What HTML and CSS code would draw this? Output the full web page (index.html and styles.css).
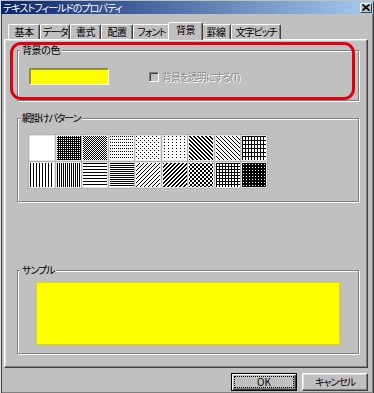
FILE: index.html
```html
<!DOCTYPE html>
<html lang="ja">
<head>
<meta charset="utf-8">
<title>テキストフィールドのプロパティ</title>
<link rel="stylesheet" href="styles.css">
</head>
<body>
<svg class="defs" width="0" height="0" aria-hidden="true">
  <defs>
    <pattern id="p-d75" width="2" height="2" patternUnits="userSpaceOnUse"><rect width="2" height="2" fill="#000"/><path d="M0 0h1v1h-1z" fill="#fff"/></pattern>
    <pattern id="p-d50" width="2" height="2" patternUnits="userSpaceOnUse"><rect width="2" height="2" fill="#fff"/><path d="M0 0h1v1h-1zM1 1h1v1h-1z" fill="#000"/></pattern>
    <pattern id="p-rows" width="2" height="3" patternUnits="userSpaceOnUse"><rect width="2" height="3" fill="#fff"/><path d="M0 0h1v1h-1z" fill="#000"/></pattern>
    <pattern id="p-dots" width="4" height="4" patternUnits="userSpaceOnUse"><rect width="4" height="4" fill="#fff"/><path d="M0 0h1v1h-1zM2 2h1v1h-1z" fill="#000"/></pattern>
    <pattern id="p-sparse" width="4" height="6" patternUnits="userSpaceOnUse"><rect width="4" height="6" fill="#fff"/><path d="M1 0h1v1h-1zM1 3h1v1h-1z" fill="#000"/></pattern>
    <pattern id="p-bk-thick" width="4" height="4" patternUnits="userSpaceOnUse"><rect width="4" height="4" fill="#fff"/><path d="M0 0h2v1h-2zM1 1h2v1h-2zM2 2h2v1h-2zM3 3h1v1h-1zM0 3h1v1h-1z" fill="#000"/></pattern>
    <pattern id="p-bk-thin" width="4" height="4" patternUnits="userSpaceOnUse"><rect width="4" height="4" fill="#fff"/><path d="M0 0h1v1h-1zM1 1h1v1h-1zM2 2h1v1h-1zM3 3h1v1h-1z" fill="#000"/></pattern>
    <pattern id="p-grid" width="3" height="4" patternUnits="userSpaceOnUse"><rect width="3" height="4" fill="#fff"/><path d="M0 0h1v4h-1zM0 0h3v1h-3z" fill="#000"/></pattern>
    <pattern id="p-v3" width="3" height="1" patternUnits="userSpaceOnUse"><rect width="3" height="1" fill="#fff"/><path d="M0 0h1v1h-1z" fill="#000"/></pattern>
    <pattern id="p-v2" width="2" height="1" patternUnits="userSpaceOnUse"><rect width="2" height="1" fill="#fff"/><path d="M0 0h1v1h-1z" fill="#000"/></pattern>
    <pattern id="p-h3" width="1" height="3" patternUnits="userSpaceOnUse"><rect width="1" height="3" fill="#fff"/><path d="M0 0h1v1h-1z" fill="#000"/></pattern>
    <pattern id="p-h2" width="1" height="2" patternUnits="userSpaceOnUse"><rect width="1" height="2" fill="#fff"/><path d="M0 0h1v1h-1z" fill="#000"/></pattern>
    <pattern id="p-fw-thin" width="4" height="4" patternUnits="userSpaceOnUse"><rect width="4" height="4" fill="#fff"/><path d="M3 0h1v1h-1zM2 1h1v1h-1zM1 2h1v1h-1zM0 3h1v1h-1z" fill="#000"/></pattern>
    <pattern id="p-fw-thick" width="4" height="4" patternUnits="userSpaceOnUse"><rect width="4" height="4" fill="#fff"/><path d="M3 0h1v1h-1zM0 0h1v1h-1zM2 1h2v1h-2zM1 2h2v1h-2zM0 3h2v1h-2z" fill="#000"/></pattern>
    <pattern id="p-x" width="4" height="4" patternUnits="userSpaceOnUse"><rect width="4" height="4" fill="#fff"/><path d="M0 0h1v1h-1zM1 1h1v1h-1zM2 2h1v1h-1zM3 3h1v1h-1zM3 0h1v1h-1zM2 1h1v1h-1zM1 2h1v1h-1zM0 3h1v1h-1z" fill="#000"/></pattern>
    <pattern id="p-grid3" width="3" height="3" patternUnits="userSpaceOnUse"><rect width="3" height="3" fill="#fff"/><path d="M0 0h1v3h-1zM0 0h3v1h-3z" fill="#000"/></pattern>
    <pattern id="p-dark" width="3" height="3" patternUnits="userSpaceOnUse"><rect width="3" height="3" fill="#000"/><path d="M1 1h1v1h-1z" fill="#fff"/></pattern>
  </defs>
</svg>

<div class="window">
  <div class="titlebar">
    <span class="title">テキストフィールドのプロパティ</span>
    <span class="close"><svg width="8" height="7" viewBox="0 0 8 7"><path d="M0.5 0.5L7.5 6.5M7.5 0.5L0.5 6.5" stroke="#000" stroke-width="1.6"/></svg></span>
  </div>

  <div class="tabs">
    <div class="tab t-basic">基本</div>
    <div class="tab t-data kana">データ</div>
    <div class="tab t-format">書式</div>
    <div class="tab t-align">配置</div>
    <div class="tab t-font kana">フォント</div>
    <div class="tab t-back active">背景</div>
    <div class="tab t-rule">罫線</div>
    <div class="tab t-pitch kana">文字ピッチ</div>
  </div>

  <div class="panel">
    <div class="group g-color">
      <div class="legend">背景の色</div>
      <div class="color-body">
        <div class="swatch"></div>
        <div class="check disabled"><span class="box"></span><span class="check-label">背景を透明にする(T)</span></div>
      </div>
    </div>

    <div class="group g-pattern">
      <div class="legend kana">網掛けパターン</div>
      <div class="pattern-grid">
        <div class="cell"><svg><rect width="100%" height="100%" fill="#fff"/></svg></div>
        <div class="cell"><svg><rect width="100%" height="100%" fill="url(#p-d75)"/></svg></div>
        <div class="cell"><svg><rect width="100%" height="100%" fill="url(#p-d50)"/></svg></div>
        <div class="cell"><svg><rect width="100%" height="100%" fill="url(#p-rows)"/></svg></div>
        <div class="cell"><svg><rect width="100%" height="100%" fill="url(#p-dots)"/></svg></div>
        <div class="cell"><svg><rect width="100%" height="100%" fill="url(#p-sparse)"/></svg></div>
        <div class="cell"><svg><rect width="100%" height="100%" fill="url(#p-bk-thick)"/></svg></div>
        <div class="cell"><svg><rect width="100%" height="100%" fill="url(#p-bk-thin)"/></svg></div>
        <div class="cell"><svg><rect width="100%" height="100%" fill="url(#p-grid)"/></svg></div>
        <div class="cell"><svg><rect width="100%" height="100%" fill="url(#p-v3)"/></svg></div>
        <div class="cell"><svg><rect width="100%" height="100%" fill="url(#p-v2)"/></svg></div>
        <div class="cell"><svg><rect width="100%" height="100%" fill="url(#p-h3)"/></svg></div>
        <div class="cell"><svg><rect width="100%" height="100%" fill="url(#p-h2)"/></svg></div>
        <div class="cell"><svg><rect width="100%" height="100%" fill="url(#p-fw-thin)"/></svg></div>
        <div class="cell"><svg><rect width="100%" height="100%" fill="url(#p-fw-thick)"/></svg></div>
        <div class="cell"><svg><rect width="100%" height="100%" fill="url(#p-x)"/></svg></div>
        <div class="cell"><svg><rect width="100%" height="100%" fill="url(#p-grid3)"/></svg></div>
        <div class="cell"><svg><rect width="100%" height="100%" fill="url(#p-dark)"/></svg></div>
      </div>
    </div>

    <div class="group g-sample">
      <div class="legend kana">サンプル</div>
      <div class="sample-body">
        <div class="sample"></div>
      </div>
    </div>
  </div>

  <div class="buttons">
    <button class="btn default"><span class="focus">OK</span></button>
    <button class="btn"><span class="focus-none kana">キャンセル</span></button>
  </div>

  <div class="annotation"></div>
</div>
</body>
</html>
```

FILE: styles.css
```css
* { box-sizing: border-box; }

html, body {
  margin: 0;
  padding: 0;
}

body {
  width: 374px;
  height: 393px;
  overflow: hidden;
  background: #c0c0c0;
  font-family: "Noto Sans CJK JP", "Noto Sans", sans-serif;
  font-size: 10px;
  font-feature-settings: "palt";
  letter-spacing: -0.4px;
  color: #000;
}

.kana { letter-spacing: -1.1px; }

.defs {
  position: absolute;
  width: 0;
  height: 0;
}

.window {
  position: relative;
  width: 374px;
  height: 393px;
  background: #c0c0c0;
  border-left: 1px solid #dfdfdf;
  border-right: 1px solid #404040;
  border-bottom: 1px solid #404040;
  box-shadow: inset 1px 0 0 #404040, inset -1px -1px 0 #808080;
}

/* title bar */
.titlebar {
  height: 13px;
  margin-top: 1px;
  display: flex;
  align-items: center;
  justify-content: space-between;
  padding: 0 1px 0 2px;
  background: linear-gradient(to right, #0a246a, #a6caf0);
  color: #fff;
}

.title {
  font-size: 10px;
  line-height: 13px;
  letter-spacing: -0.9px;
  white-space: nowrap;
}

.close {
  width: 12px;
  height: 10px;
  display: flex;
  align-items: center;
  justify-content: center;
  background: #c0c0c0;
  border: 1px solid;
  border-color: #fff #404040 #404040 #fff;
}

.close svg { display: block; }

/* tabs */
.tabs {
  display: flex;
  align-items: flex-end;
  height: 17px;
  margin: 8px 0 0 7px;
}

.tab {
  height: 15px;
  padding: 0;
  text-align: center;
  border: 1px solid;
  border-bottom: 0;
  border-color: #fff #404040 transparent #fff;
  border-radius: 2px 2px 0 0;
  box-shadow: inset -1px 0 0 #808080;
  line-height: 14px;
  white-space: nowrap;
  background: #c0c0c0;
}

.t-basic  { width: 32px; }
.t-data   { width: 30px; }
.t-format { width: 31px; }
.t-align  { width: 32px; }
.t-font   { width: 37px; }
.t-back   { width: 35px; }
.t-rule   { width: 30px; }
.t-pitch  { width: 50px; }

.tab.active {
  position: relative;
  z-index: 1;
  height: 18px;
  margin: 0 -2px -1px;
  line-height: 14px;
}

/* panel */
.panel {
  width: 364px;
  height: 329px;
  margin-left: 3px;
  padding: 10px 0 0 12px;
  border: 1px solid;
  border-color: #fff #404040 #404040 #fff;
  box-shadow: inset -1px -1px 0 #808080, inset 1px 1px 0 #dfdfdf;
}

.group {
  width: 342px;
  border: 1px solid #808080;
  box-shadow: inset 1px 1px 0 #fff, 1px 1px 0 #fff;
}

.g-color { height: 51px; }
.g-pattern { height: 84px; margin-top: 17px; }
.g-sample { height: 84px; margin-top: 68px; }

.legend {
  display: table;
  margin: -7px 0 -5px 2px;
  padding: 0 2px;
  line-height: 12px;
  background: #c0c0c0;
  white-space: nowrap;
}

/* colour group */
.color-body {
  display: flex;
  align-items: center;
  padding: 17px 0 0 11px;
}

.swatch {
  width: 80px;
  height: 17px;
  background: #ffff00;
  border: 1px solid;
  border-color: #808080 #fff #fff #808080;
  box-shadow: inset 1px 1px 0 #a0a000;
}

.check {
  display: flex;
  align-items: center;
  margin-left: 40px;
  margin-top: 1px;
}

.box {
  width: 10px;
  height: 10px;
  background: #c0c0c0;
  border: 1px solid;
  border-color: #808080 #fff #fff #808080;
  box-shadow: inset 1px 1px 0 #404040;
}

.check-label {
  margin-left: 3px;
  line-height: 12px;
  letter-spacing: -1.1px;
  white-space: nowrap;
}

.check.disabled .check-label {
  color: #8c8c8c;
  text-shadow: 1px 1px 0 #fff;
}

/* pattern group */
.pattern-grid {
  display: grid;
  grid-template-columns: repeat(9, 26px);
  grid-auto-rows: 26px;
  column-gap: 0.5px;
  row-gap: 1px;
  padding: 16px 0 0 11px;
}

.cell {
  border: 1px solid #e4e4e4;
  box-shadow: 0 0 0 1px #b4b4b4;
}

.cell svg {
  display: block;
  width: 24px;
  height: 24px;
  shape-rendering: crispEdges;
}

/* sample group */
.sample-body {
  padding: 11px 0 0 18px;
}

.sample {
  width: 304px;
  height: 63px;
  background: #ffff00;
  border: 1px solid #d8d800;
}

/* buttons */
.buttons {
  display: flex;
  justify-content: flex-end;
  gap: 5px;
  margin: 5px 5px 0 0;
}

.btn {
  width: 66px;
  height: 18px;
  padding: 0;
  display: flex;
  align-items: stretch;
  background: #c0c0c0;
  font: inherit;
  color: #000;
  border: 1px solid;
  border-color: #fff #404040 #404040 #fff;
  box-shadow: inset -1px -1px 0 #808080, inset 1px 1px 0 #dfdfdf;
}

.btn.default {
  border: 1px solid #000;
  box-shadow: inset 1px 1px 0 #fff, inset -1px -1px 0 #404040, inset -2px -2px 0 #808080;
}

.focus,
.focus-none {
  flex: 1;
  display: flex;
  align-items: center;
  justify-content: center;
  line-height: 10px;
}

.focus {
  margin: 2px;
  border: 1px dotted #000;
}

/* annotation overlay */
.annotation {
  position: absolute;
  left: 9px;
  top: 41px;
  width: 345px;
  height: 58px;
  border: 3px solid #e00010;
  border-radius: 11px;
  pointer-events: none;
}
```
